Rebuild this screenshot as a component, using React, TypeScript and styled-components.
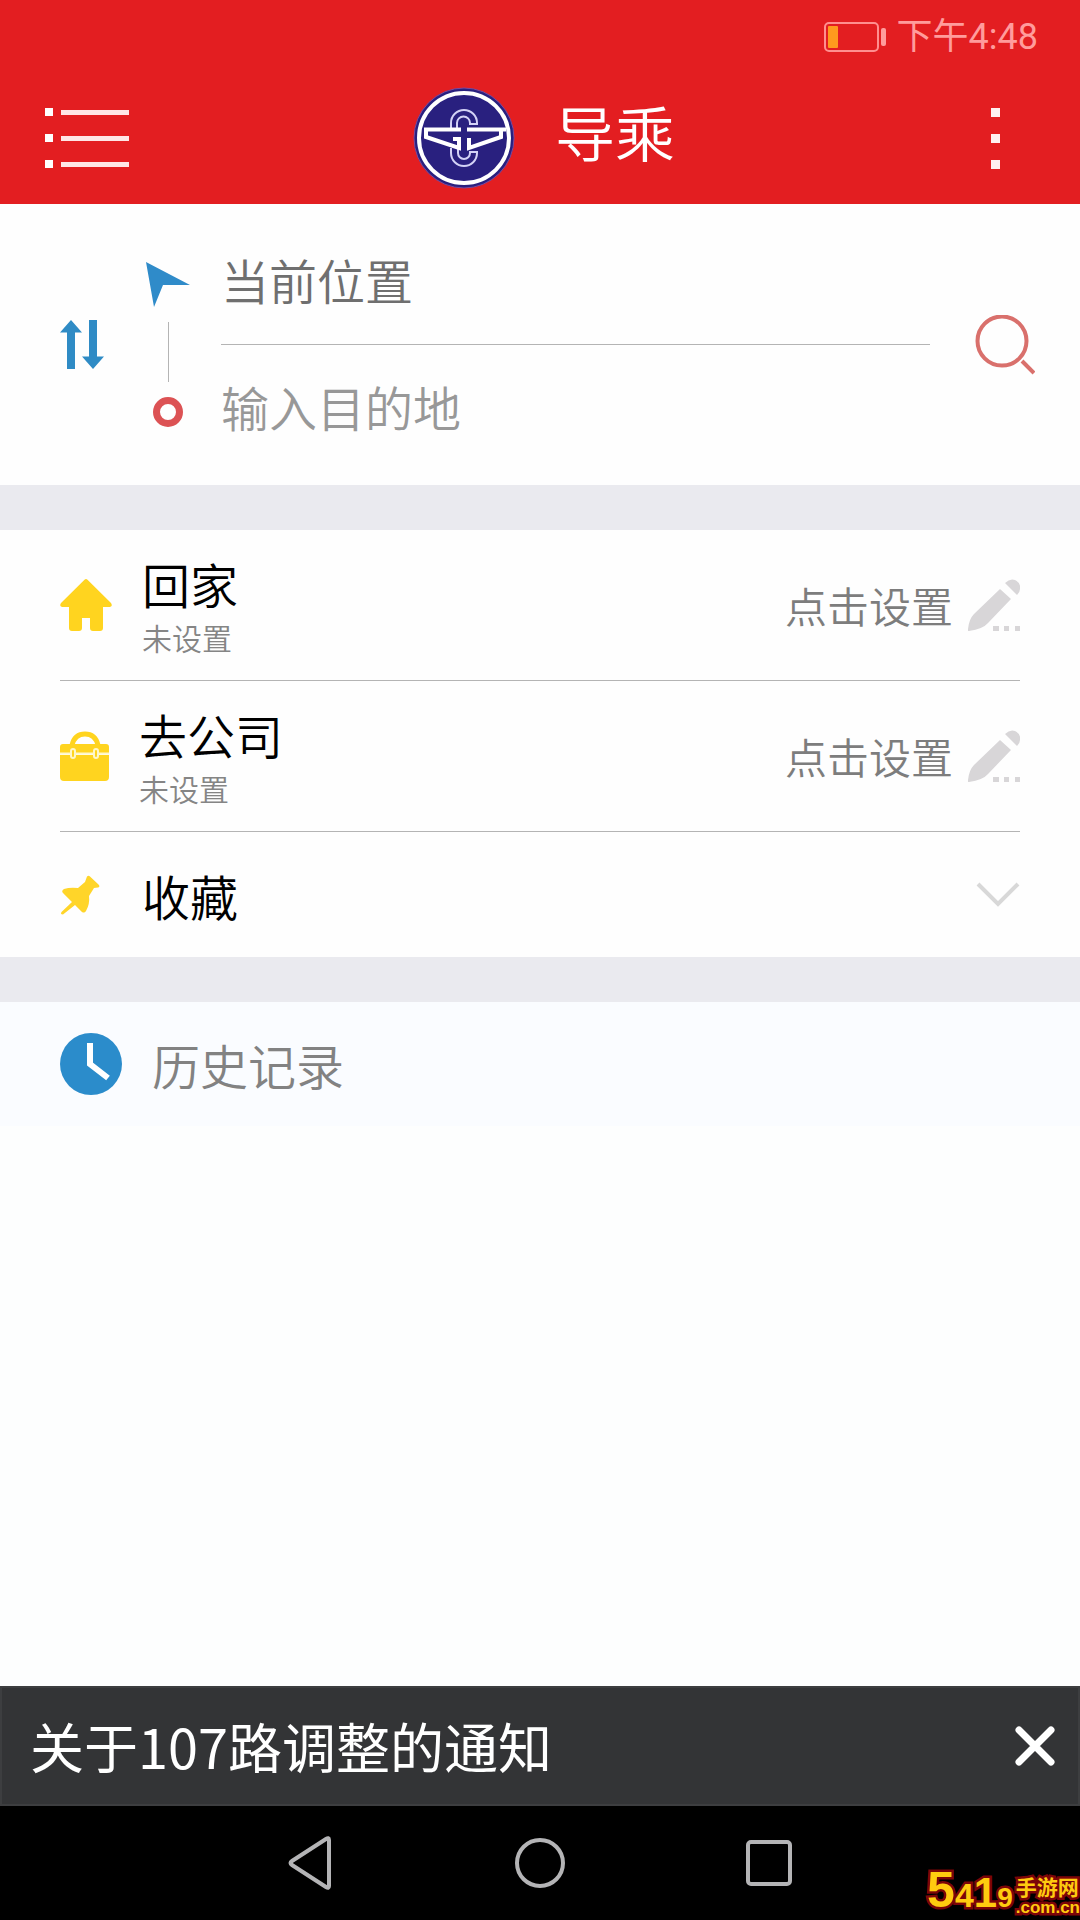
import React, { useState } from "react";
import styled, { createGlobalStyle } from "styled-components";

const GlobalStyle = createGlobalStyle`
  *, *::before, *::after { box-sizing: border-box; }
  body {
    margin: 0;
    background: #fefefe;
    font-family: "Noto Sans CJK SC", sans-serif;
    font-weight: 350;
    color: #000;
  }
  button, input { font: inherit; color: inherit; }
  svg { display: block; flex: none; }
`;

const Screen = styled.div`
  display: flex;
  flex-direction: column;
  min-height: 100vh;
`;

const TopArea = styled.header`
  background: #e31e21;
  color: #fff;
`;

const StatusBar = styled.div`
  display: flex;
  align-items: center;
  justify-content: flex-end;
  gap: 10px;
  height: 72px;
  padding: 2px 42px 0 0;
  color: #ff9c9c;
  font-family: Roboto, "Noto Sans CJK SC", sans-serif;
  font-size: 36px;
  font-weight: 400;
  line-height: 40px;
`;

const TitleBar = styled.div`
  display: grid;
  grid-template-columns: 1fr auto 1fr;
  align-items: center;
  height: 132px;
`;

const IconButton = styled.button`
  display: flex;
  align-items: center;
  justify-content: center;
  flex: none;
  padding: 0;
  border: 0;
  background: none;
  cursor: pointer;
`;

const MenuButton = styled(IconButton)`
  justify-self: start;
  margin-left: 45px;
`;

const MoreButton = styled(IconButton)`
  justify-self: end;
  margin-right: 80px;
`;

const Brand = styled.div`
  display: flex;
  align-items: center;
  gap: 40px;
  padding-left: 8px;
`;

const Title = styled.h1`
  margin: 0;
  padding-bottom: 14px;
  font-size: 60px;
  font-weight: 350;
  line-height: 72px;
`;

const RoutePanel = styled.form`
  display: flex;
  align-items: center;
  padding: 16px 45px 16px 60px;
  background: #fefefe;
`;

const Markers = styled.div`
  display: flex;
  flex-direction: column;
  align-items: center;
  gap: 15px;
  margin: 0 31px 0 42px;
`;

const Connector = styled.span`
  width: 1px;
  height: 60px;
  background: #b4b4b4;
`;

const Ring = styled.span`
  width: 30px;
  height: 30px;
  border: 7px solid #dc5254;
  border-radius: 50%;
`;

const Fields = styled.div`
  flex: 1;
  min-width: 0;
  margin-right: 45px;
`;

const Field = styled.label<{ $divided?: boolean }>`
  display: flex;
  align-items: center;
  height: ${(p) => (p.$divided ? 125 : 124)}px;
  padding-bottom: ${(p) => (p.$divided ? 6 : 2)}px;
  border-bottom: ${(p) => (p.$divided ? "1px solid #b4b4b4" : "0")};
`;

const Input = styled.input`
  width: 100%;
  height: 72px;
  padding: 0;
  border: 0;
  outline: 0;
  background: none;
  color: #6f6f6f;
  font-size: 48px;
  &::placeholder { color: #989898; opacity: 1; }
`;

const Band = styled.div`
  height: 45px;
  background: #eaeaef;
`;

const List = styled.ul`
  margin: 0;
  padding: 0 60px;
  list-style: none;
  background: #fefefe;
`;

const Row = styled.li<{ $compact?: boolean }>`
  display: flex;
  align-items: center;
  gap: 30px;
  height: ${(p) => (p.$compact ? 125 : 151)}px;
  border-bottom: ${(p) => (p.$compact ? "0" : "1px solid #b4b4b4")};
`;

const RowText = styled.div`
  flex: 1;
  min-width: 0;
`;

const RowTitle = styled.div`
  font-size: 48px;
  line-height: 70px;
`;

const RowNote = styled.div`
  color: #858585;
  font-family: Roboto, "Noto Sans CJK SC", sans-serif;
  font-size: 30px;
  line-height: 44px;
`;

const SetButton = styled(IconButton)`
  gap: 15px;
  color: #7d7d7d;
  font-size: 42px;
  line-height: 60px;
`;

const HistoryHeader = styled.section`
  display: flex;
  align-items: center;
  gap: 30px;
  height: 124px;
  padding: 0 60px;
  background: #fafcff;
`;

const HistoryTitle = styled.h2`
  margin: 0;
  color: #828282;
  font-size: 48px;
  font-weight: 350;
  line-height: 60px;
`;

const HistoryList = styled.main`
  flex: 1;
  background: #fdfefe;
`;

const Notice = styled.aside`
  display: flex;
  align-items: center;
  justify-content: space-between;
  height: 120px;
  padding: 0 23px 0 28px;
  border: 2px solid #3d3e40;
  background: #333436;
  color: #fff;
`;

const NoticeLink = styled.a`
  color: inherit;
  font-size: 54px;
  font-weight: 400;
  line-height: 72px;
  text-decoration: none;
`;

const NavBar = styled.nav`
  position: relative;
  display: flex;
  align-items: center;
  justify-content: center;
  gap: 181px;
  height: 114px;
  background: #000;
`;

const Watermark = styled.div`
  position: absolute;
  right: 0;
  bottom: 0;
  display: flex;
  align-items: flex-end;
  gap: 3px;
  height: 54px;
  color: #ffcb0f;
  font-family: "Liberation Sans", "Noto Sans CJK SC", sans-serif;
  font-weight: 700;
  paint-order: stroke fill;
  -webkit-text-stroke: 5px #7c0508;
`;

const WatermarkDigits = styled.span`
  display: flex;
  align-items: baseline;
  line-height: 44px;
`;

const Digit = styled.span<{ $size: number }>`
  font-size: ${(p) => p.$size}px;
`;

const WatermarkSite = styled.span`
  display: flex;
  flex-direction: column;
  padding-bottom: 2px;
  font-size: 21px;
  line-height: 20px;
`;

const WatermarkDomain = styled.span`
  font-size: 17px;
`;

const Battery = () => (
  <svg width="63" height="30" viewBox="0 0 63 30" aria-hidden="true">
    <rect x="1" y="1" width="53" height="28" rx="4" fill="none" stroke="#ff8f8f" strokeWidth="2" />
    <rect x="4" y="4" width="10" height="22" rx="1" fill="#ff9a1e" />
    <rect x="57" y="6" width="5" height="18" rx="2" fill="#ff9c9c" />
  </svg>
);

const MenuIcon = () => (
  <svg width="84" height="60" viewBox="0 0 84 60" fill="#fff" aria-hidden="true">
    {[0, 26, 52].map((y) => (
      <React.Fragment key={y}>
        <rect x="0" y={y} width="8" height="8" />
        <rect x="16" y={y + 2} width="68" height="5" fill="#ffe6e6" />
      </React.Fragment>
    ))}
  </svg>
);

const MoreIcon = () => (
  <svg width="9" height="61" viewBox="0 0 9 61" fill="#fff0f0" aria-hidden="true">
    <rect width="9" height="9" />
    <rect y="26" width="9" height="9" />
    <rect y="52" width="9" height="9" />
  </svg>
);

const Logo = () => (
  <svg width="102" height="102" viewBox="0 0 102 102" fill="none" aria-hidden="true">
    <circle cx="51" cy="51" r="50" fill="#29207f" stroke="#7a4a9e" />
    <circle cx="51" cy="51" r="45" stroke="#fff" strokeWidth="4" />
    <g stroke="#d3d2f6" strokeWidth="2">
      <path d="M38 41V36a13 13 0 0 1 26 0v1H57v-1a6 6 0 0 0-13 0v5" />
      <path d="M38 61v5a13 13 0 0 0 26 0v-1H57v1a6 6 0 0 1-12 0v-4" />
    </g>
    <path d="M48 42.500H13V50l33 11V52h-6" stroke="#fff" strokeWidth="4" />
    <path d="M54 42.500H93M88 43v7L56 61V51" stroke="#fff" strokeWidth="4" />
  </svg>
);

const SwapIcon = () => (
  <svg width="44" height="49" viewBox="0 0 44 49" fill="#2f8bc5" aria-hidden="true">
    <path d="M11 0 22 12.500H15V49H7V12.500H0Z" />
    <path d="M29 0h8v36.500h7L33 49 22 36.500h7Z" />
  </svg>
);

const LocationIcon = () => (
  <svg width="44" height="45" viewBox="0 0 44 45" fill="#2f8bc9" aria-hidden="true">
    <path d="M0 0 44 23H17L8 45Z" />
  </svg>
);

const SearchIcon = () => (
  <svg width="60" height="60" viewBox="0 0 60 60" fill="none" stroke="#d9706c" strokeWidth="4" aria-hidden="true">
    <circle cx="27" cy="26" r="24.500" />
    <path d="m47 46 12 12" />
  </svg>
);

const HomeIcon = () => (
  <svg width="52" height="52" viewBox="0 0 52 52" fill="#ffd41f" aria-hidden="true">
    <path d="M24.500 .8q1.500-1.600 3 0L51 24q2 3.500-1 4H43v21q0 3-3 3H33q-3 0-3-3V39H22V49q0 3-3 3H12q-3 0-3-3V28H2q-3-.5-1-4Z" />
  </svg>
);

const BriefcaseIcon = () => (
  <svg width="49" height="50" viewBox="0 0 49 50" aria-hidden="true">
    <path d="M12 14C14 6 19 3 25 3s11 3 13 11" fill="none" stroke="#ffd41f" strokeWidth="5" />
    <path d="M3 13H46q3 0 3 3v7H0V16q0-3 3-3ZM0 24H49V46q0 4-4 4H4q-4 0-4-4Z" fill="#ffd41f" />
    <path d="M0 22.500H49" stroke="#fff7c8" strokeWidth="2" />
    <g fill="#ffd41f" stroke="#fff7c8" strokeWidth="2">
      <rect x="11" y="18" width="4" height="9" rx="2" />
      <rect x="34" y="18" width="4" height="9" rx="2" />
    </g>
  </svg>
);

const PinIcon = () => (
  <svg width="52" height="40" viewBox="0 0 52 40" fill="#ffd529" aria-hidden="true">
    <path d="M27 1.500q1.500-1.500 3 0L39 10q1 2-1 2.500l-4 .5-5 8q1 8-3 15-1.500 2.500-4 1L15 30 3 39.500q-3 0-1.500-2.500L12 27 3 18q-2-2 1-4 6-2 14-1l7-6Z" />
  </svg>
);

const PencilIcon = () => (
  <svg width="52" height="52" viewBox="0 0 52 52" fill="#d8d6d8" aria-hidden="true">
    <path d="M32 10 43 20 20 44Q15 50 1 52q-2 0-1-2Q1 40 6 35Z" />
    <path d="M37 4q5-5 10-3 6 3 5 9 0 3-3 6Z" />
    <path d="M25 47h6v5h-6zM36 47h5v5h-5zM47 47h5v5h-5z" />
  </svg>
);

const ChevronIcon = () => (
  <svg width="44" height="26" viewBox="0 0 44 26" fill="none" stroke="#d8d8d8" strokeWidth="4" aria-hidden="true">
    <path d="M2 2 22 22 42 2" />
  </svg>
);

const ClockIcon = () => (
  <svg width="62" height="62" viewBox="0 0 62 62" fill="none" aria-hidden="true">
    <circle cx="31" cy="31" r="31" fill="#2b8ccb" />
    <path d="M30 10V31L48 45" stroke="#fff" strokeWidth="6" />
  </svg>
);

const CloseIcon = () => (
  <svg width="40" height="40" viewBox="0 0 40 40" stroke="#fff" strokeWidth="7" strokeLinecap="round" aria-hidden="true">
    <path d="m4 4 32 32M36 4 4 36" />
  </svg>
);

const BackIcon = () => (
  <svg width="46" height="58" viewBox="0 0 46 58" fill="none" stroke="#b4b4b6" strokeWidth="4" strokeLinejoin="round" aria-hidden="true">
    <path d="M41 6V52q0 3-3 1L4 31q-3-2 0-4L38 5q3-2 3 1Z" />
  </svg>
);

const HomeNavIcon = () => (
  <svg width="50" height="50" viewBox="0 0 50 50" fill="none" stroke="#b4b4b6" strokeWidth="4" aria-hidden="true">
    <circle cx="25" cy="25" r="23" />
  </svg>
);

const RecentIcon = () => (
  <svg width="46" height="46" viewBox="0 0 46 46" fill="none" stroke="#b4b4b6" strokeWidth="4" aria-hidden="true">
    <rect x="2" y="2" width="42" height="42" rx="3" />
  </svg>
);

const places = [
  { title: "回家", icon: <HomeIcon /> },
  { title: "去公司", icon: <BriefcaseIcon /> },
];

export default function App() {
  const [origin, setOrigin] = useState("当前位置");
  const [destination, setDestination] = useState("");

  const swap = () => {
    setOrigin(destination);
    setDestination(origin);
  };

  return (
    <Screen>
      <GlobalStyle />
      <TopArea>
        <StatusBar>
          <Battery />
          <time>下午4:48</time>
        </StatusBar>
        <TitleBar>
          <MenuButton type="button" aria-label="菜单"><MenuIcon /></MenuButton>
          <Brand>
            <Logo />
            <Title>导乘</Title>
          </Brand>
          <MoreButton type="button" aria-label="更多"><MoreIcon /></MoreButton>
        </TitleBar>
      </TopArea>

      <RoutePanel onSubmit={(e) => e.preventDefault()}>
        <IconButton type="button" aria-label="交换起点和终点" onClick={swap}><SwapIcon /></IconButton>
        <Markers>
          <LocationIcon />
          <Connector />
          <Ring />
        </Markers>
        <Fields>
          <Field $divided>
            <Input aria-label="起点" value={origin} onChange={(e) => setOrigin(e.target.value)} />
          </Field>
          <Field>
            <Input
              aria-label="目的地"
              placeholder="输入目的地"
              value={destination}
              onChange={(e) => setDestination(e.target.value)}
            />
          </Field>
        </Fields>
        <IconButton type="submit" aria-label="搜索"><SearchIcon /></IconButton>
      </RoutePanel>

      <Band />
      <List>
        {places.map((place) => (
          <Row key={place.title}>
            {place.icon}
            <RowText>
              <RowTitle>{place.title}</RowTitle>
              <RowNote>未设置</RowNote>
            </RowText>
            <SetButton type="button">
              点击设置
              <PencilIcon />
            </SetButton>
          </Row>
        ))}
        <Row $compact>
          <PinIcon />
          <RowText>
            <RowTitle>收藏</RowTitle>
          </RowText>
          <IconButton type="button" aria-label="展开收藏"><ChevronIcon /></IconButton>
        </Row>
      </List>
      <Band />

      <HistoryHeader>
        <ClockIcon />
        <HistoryTitle>历史记录</HistoryTitle>
      </HistoryHeader>
      <HistoryList />

      <Notice>
        <NoticeLink href="#notice">关于107路调整的通知</NoticeLink>
        <IconButton type="button" aria-label="关闭"><CloseIcon /></IconButton>
      </Notice>
      <NavBar>
        <IconButton type="button" aria-label="返回"><BackIcon /></IconButton>
        <IconButton type="button" aria-label="主屏幕"><HomeNavIcon /></IconButton>
        <IconButton type="button" aria-label="最近任务"><RecentIcon /></IconButton>
        <Watermark>
          <WatermarkDigits>
            <Digit $size={50}>5</Digit>
            <Digit $size={34}>4</Digit>
            <Digit $size={42}>1</Digit>
            <Digit $size={28}>9</Digit>
          </WatermarkDigits>
          <WatermarkSite>
            <span>手游网</span>
            <WatermarkDomain>.com.cn</WatermarkDomain>
          </WatermarkSite>
        </Watermark>
      </NavBar>
    </Screen>
  );
}
